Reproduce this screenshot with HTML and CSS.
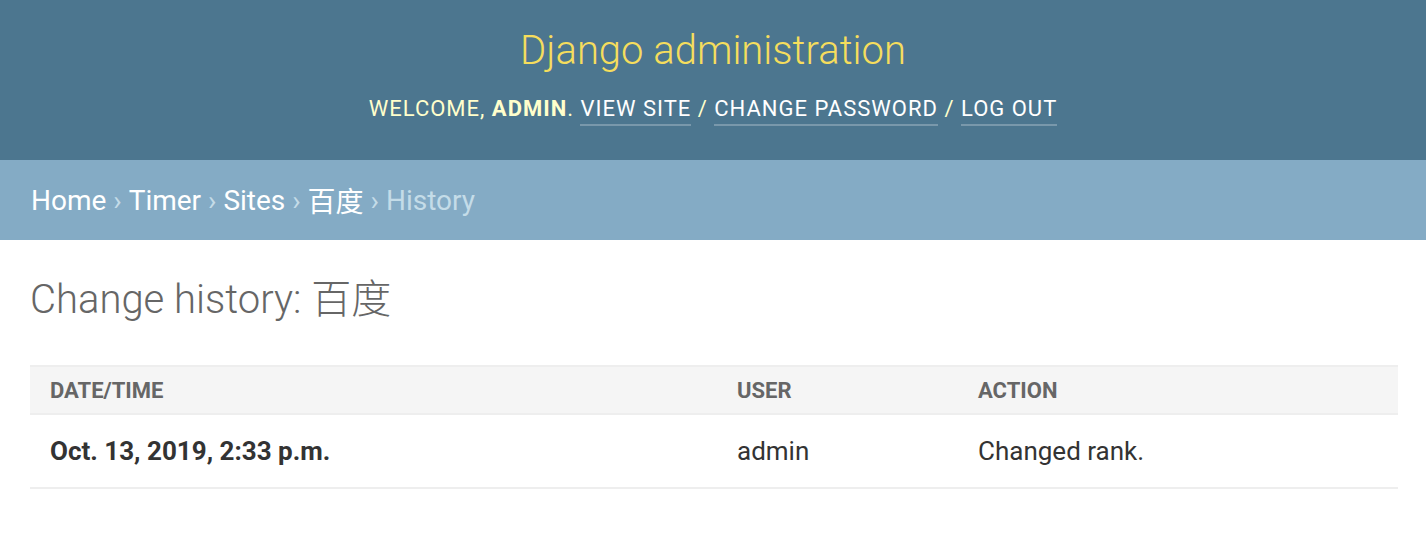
FILE: index.html
```html
<!DOCTYPE html>
<html lang="en">
<head>
<meta charset="utf-8">
<title>Change history: 百度 | Django site admin</title>
<link rel="stylesheet" href="styles.css">
</head>
<body>
<div class="header">
  <h1 class="branding">Django administration</h1>
  <div class="user-tools">
    Welcome, <strong>admin</strong>. <a href="#">View site</a> / <a href="#">Change password</a> / <a href="#">Log out</a>
  </div>
</div>
<div class="breadcrumbs">
  <a href="#">Home</a> › <a href="#">Timer</a> › <a href="#">Sites</a> › <a href="#">百度</a> › History
</div>
<div class="content">
  <h1 class="page-title">Change history: 百度</h1>
  <table class="history">
    <thead>
      <tr>
        <th class="col-date">Date/time</th>
        <th class="col-user">User</th>
        <th class="col-action">Action</th>
      </tr>
    </thead>
    <tbody>
      <tr>
        <th class="row-date">Oct. 13, 2019, 2:33 p.m.</th>
        <td>admin</td>
        <td>Changed rank.</td>
      </tr>
    </tbody>
  </table>
</div>
</body>
</html>
```
FILE: styles.css
```css
html, body {
  margin: 0;
  padding: 0;
  background: #fff;
  font-family: Roboto, "Noto Sans CJK SC", "Liberation Sans", sans-serif;
  color: #333;
}

.header {
  background: #4c768f;
  height: 160px;
  box-sizing: border-box;
  padding-top: 26px;
  display: flex;
  flex-direction: column;
  align-items: center;
}

.branding {
  margin: 0;
  font-size: 40px;
  font-weight: 300;
  line-height: 50px;
  color: #f5dd5d;
}

.user-tools {
  margin-top: 19px;
  font-size: 22px;
  line-height: 28px;
  letter-spacing: 1px;
  text-transform: uppercase;
  color: #ffc;
}

.user-tools strong {
  font-weight: 700;
}

.user-tools a {
  color: #fff;
  text-decoration: none;
  border-bottom: 2px solid rgba(255, 255, 255, 0.25);
  padding-bottom: 3px;
}

.breadcrumbs {
  background: #84abc5;
  height: 80px;
  box-sizing: border-box;
  padding: 0 31px;
  display: flex;
  align-items: center;
  font-size: 28px;
  color: #c4dce8;
  white-space: pre;
}

.breadcrumbs a {
  color: #fff;
  text-decoration: none;
}

.content {
  padding: 36px 28px 0 30px;
}

.page-title {
  margin: 0;
  font-size: 40px;
  font-weight: 300;
  line-height: 48px;
  color: #666;
}

.history {
  margin-top: 41px;
  width: 100%;
  border-collapse: collapse;
}

.history thead th {
  background: #f5f5f5;
  border-top: 2px solid #eee;
  border-bottom: 2px solid #eee;
  color: #666;
  font-size: 22px;
  font-weight: 700;
  text-transform: uppercase;
  text-align: left;
  height: 46px;
  padding: 0 20px;
}

.col-date { width: 647px; }
.col-user { width: 201px; }

.history tbody th,
.history tbody td {
  text-align: left;
  font-size: 26px;
  height: 72px;
  padding: 0 20px;
  border-bottom: 2px solid #eee;
  color: #333;
}

.history tbody th {
  font-weight: 700;
}

.history tbody td {
  font-weight: 400;
}
```
